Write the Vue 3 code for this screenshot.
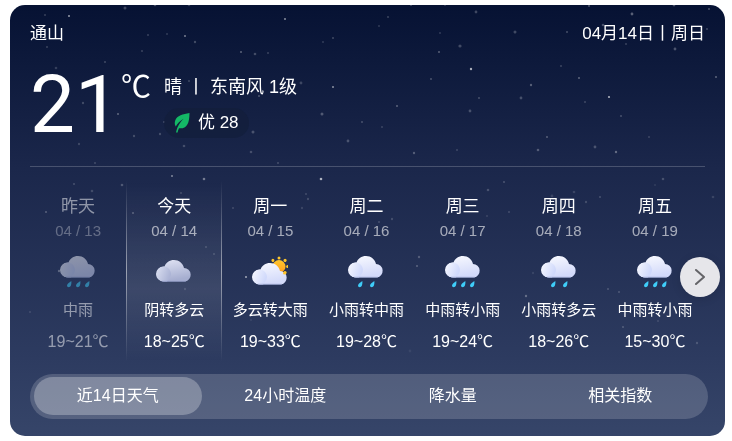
<script setup>
import { ref } from 'vue'

const days = [
  { name: '昨天', date: '04 / 13', icon: 'rain3', text: '中雨', temp: '19~21℃', past: true },
  { name: '今天', date: '04 / 14', icon: 'cloud', text: '阴转多云', temp: '18~25℃', today: true },
  { name: '周一', date: '04 / 15', icon: 'sun', text: '多云转大雨', temp: '19~33℃' },
  { name: '周二', date: '04 / 16', icon: 'rain2', text: '小雨转中雨', temp: '19~28℃' },
  { name: '周三', date: '04 / 17', icon: 'rain3', text: '中雨转小雨', temp: '19~24℃' },
  { name: '周四', date: '04 / 18', icon: 'rain2', text: '小雨转多云', temp: '18~26℃' },
  { name: '周五', date: '04 / 19', icon: 'rain3', text: '中雨转小雨', temp: '15~30℃' },
]

const tabs = ['近14日天气', '24小时温度', '降水量', '相关指数']
const active = ref(0)

const rays = [0, 45, 90, 135, 180, 225, 270, 315]
const drops = { rain3: [9, 18, 27], rain2: [12, 24] }

// Star field: x, y, radius, opacity
const stars = [
  [35, 10, 1, .3], [59, 11, 1, .9], [115, 3, 1.5, .35], [145, 0, 1.3, .4], [179, 0, 1.3, .3],
  [138, 30, 1, .3], [157, 29, 1, .25], [175, 31, 1, .7], [185, 37, 1.2, .35], [132, 46, 1, .3],
  [37, 42, 1, .3], [95, 57, 1.1, .3], [46, 63, 1.3, .25], [275, 14, 1, .8], [313, 37, 1, .25],
  [323, 33, 1, .35], [231, 47, 1, .5], [245, 49, 1.3, .35], [258, 48, 1, .3], [179, 76, 1, .3],
  [291, 78, 1.4, .3], [323, 82, 1, .8], [249, 91, 1, .4], [312, 109, 1.5, .4], [352, 117, 1, .35],
  [338, 136, 1.4, .35], [243, 127, 1.5, .35], [241, 147, 1.3, .3], [268, 158, 1, .3], [154, 117, 1, .3],
  [150, 129, 1.2, .3], [174, 141, 1.3, .3], [124, 131, 1.2, .3], [108, 109, 1, .5], [73, 98, 1.2, .3],
  [69, 139, 1.2, .25], [85, 158, 1.1, .25], [162, 171, 1, .7], [194, 174, 1.3, .6], [311, 174, 1.3, 1],
  [401, 0, 1, .4], [435, 0, 1, .3], [466, 7, 1.4, .35], [378, 12, 1.1, .3], [369, 21, 1, .25],
  [430, 28, 1, .25], [505, 27, 1.5, .35], [450, 41, 1.6, .35], [429, 47, 1.1, .45], [461, 64, 1.2, 1],
  [421, 74, 1.1, .35], [521, 80, 1.2, .45], [511, 93, 1.4, .35], [469, 93, 1, .35], [460, 106, 1.4, .35],
  [387, 101, 1.1, .45], [372, 122, 1, .25], [404, 148, 1.2, .4], [447, 145, 1, .25], [528, 145, 1.3, .4],
  [537, 132, 1.1, .4], [551, 61, 1, .3], [569, 73, 1, .5], [599, 92, 1.1, 1], [575, 97, 1, .3],
  [611, 111, 1, .35], [585, 142, 1.4, .35], [606, 147, 1.2, .5], [639, 132, 1, .25], [557, 27, 1.1, .35],
  [579, 1, 1.1, .4], [622, 9, 1.4, .5], [593, 20, 1.3, .4], [664, 0, 1.4, .45], [699, 4, 1.1, .4],
  [697, 24, 1, .35], [665, 44, 1.4, .4], [616, 39, 1, .3], [706, 72, 1, .5], [653, 174, 1.3, .3],
  [64, 179, 1, .3], [112, 180, 1.3, .35], [82, 186, 1.3, .25], [36, 207, 1, .4], [20, 307, 1, .2],
  [49, 266, 1.2, .4], [123, 208, 1, .4], [171, 188, 1, .25], [196, 242, 1, .25], [204, 249, 1, .25],
  [175, 284, 1.2, .2], [296, 189, 1, .25], [298, 194, 1.2, .25], [292, 203, 1.2, .2], [223, 203, 1, .25],
  [382, 214, 1.2, .25], [369, 217, 1, .25], [409, 252, 1.2, .35], [407, 261, 1, .4], [236, 272, 1, .9],
  [241, 315, 1.2, .1], [400, 346, 1.4, .1], [494, 177, 1.1, .3], [478, 185, 1.3, .3], [542, 191, 1.4, .2],
  [564, 187, 1.3, .2], [590, 192, 1, .3], [576, 197, 1.2, .25], [499, 207, 1, .25], [477, 211, 1, .2],
  [523, 268, 1.2, .15], [516, 291, 1.2, .45], [598, 284, 1, .3], [422, 312, 1, .2], [469, 335, 1, .25],
  [645, 180, 1, .15], [703, 192, 1.3, .2], [609, 287, 1, .3], [613, 322, 1.1, .3], [648, 316, 1, .2],
  [687, 338, 1.2, .25],
]
</script>

<template>
  <main class="card">
    <svg class="sky" viewBox="0 0 715 431" preserveAspectRatio="xMidYMin slice" aria-hidden="true">
      <defs>
        <linearGradient id="cloudFill" x1="0" y1="0" x2="0.3" y2="1">
          <stop offset="0" stop-color="#fafbff" />
          <stop offset="1" stop-color="#d3dafa" />
        </linearGradient>
        <linearGradient id="cloudPuff" x1="0" y1="0" x2="1" y2="0.4">
          <stop offset="0" stop-color="#f8f9ff" />
          <stop offset="1" stop-color="#d0d9fb" />
        </linearGradient>
        <linearGradient id="greyFill" x1="0" y1="0" x2="0.3" y2="1">
          <stop offset="0" stop-color="#e2e5f5" />
          <stop offset="1" stop-color="#a6aed0" />
        </linearGradient>
        <linearGradient id="greyPuff" x1="0" y1="0" x2="1" y2="0.4">
          <stop offset="0" stop-color="#dde1f2" />
          <stop offset="1" stop-color="#adb5d6" />
        </linearGradient>
        <linearGradient id="sunFill" x1="0" y1="0" x2="0" y2="1">
          <stop offset="0" stop-color="#ffc72e" />
          <stop offset="1" stop-color="#ff9d1c" />
        </linearGradient>
      </defs>
      <g opacity="0.65" fill="#fff">
        <circle v-for="(s, i) in stars" :key="i" :cx="s[0]" :cy="s[1]" :r="s[2]" :opacity="s[3]" />
      </g>
    </svg>

    <header class="top">
      <span>通山</span>
      <span>04月14日丨周日</span>
    </header>

    <section class="now">
      <span class="degrees">21</span>
      <span class="unit">℃</span>
      <div class="details">
        <p class="wind">晴 丨 东南风 1级</p>
        <p class="air">
          <svg width="16" height="20" viewBox="0 0 16 20" aria-hidden="true">
            <path d="M15.500 0C9 1 3 2.500 1.200 7.500C.4 10 .8 12 1.800 13.600C3.500 10.500 6 8 9.500 5.800C6.500 9 3.500 12.500 2 19.500L3.600 19.500C3.900 17.800 4.300 16.500 5 15.300C12.500 16 15.500 11 15.500 0Z" fill="#14b866" />
          </svg>
          <span>优 28</span>
        </p>
      </div>
    </section>

    <section class="forecast">
      <ul class="days">
        <li v-for="d in days" :key="d.date" class="day" :class="{ past: d.past, today: d.today }">
          <span class="name">{{ d.name }}</span>
          <span class="date">{{ d.date }}</span>
          <svg class="icon" width="36" height="40" viewBox="0 0 36 40" aria-hidden="true">
            <g v-if="d.icon === 'sun'" transform="translate(27 15.500)">
              <circle r="6.500" fill="url(#sunFill)" />
              <circle v-for="r in rays" :key="r" cx="0" cy="-8.600" r="1.500" fill="#ffc62b" :transform="`rotate(${r})`" />
            </g>
            <g :transform="d.icon === 'sun' ? 'translate(0 12)' : d.icon === 'cloud' ? 'translate(0 9)' : 'translate(0 5)'">
              <path
                d="M8 21.500A7.500 7.500 0 0 1 8.500 6.500C10 2.500 13.500 0 18 0C23 0 27 3.500 28 8A6.800 6.800 0 0 1 29 21.500Z"
                :fill="d.icon === 'cloud' ? 'url(#greyFill)' : 'url(#cloudFill)'"
              />
              <path
                d="M7.500 6.500A7.500 7.500 0 0 1 13 19L11 21.500H7.500A7.500 7.500 0 0 1 7.500 6.500Z"
                :fill="d.icon === 'cloud' ? 'url(#greyPuff)' : 'url(#cloudPuff)'"
              />
              <path d="M6 21.200H30" stroke="#9aa6d4" stroke-width="1" opacity="0.6" />
            </g>
            <circle v-if="d.icon === 'sun'" cx="32.500" cy="22" r="1.500" fill="#ffc62b" />
            <path
              v-for="x in drops[d.icon] || []"
              :key="x"
              :transform="`translate(${x} 30)`"
              d="M2.300 0C0 1.500 -2 3 -2 4.600C-2 6.600 1 6.800 1.800 4.800C2.400 3.200 2.500 1.500 2.300 0Z"
              fill="#3fcdf8"
            />
          </svg>
          <span class="text">{{ d.text }}</span>
          <span class="temp">{{ d.temp }}</span>
        </li>
      </ul>
      <button class="next" type="button" aria-label="后几天">
        <svg width="12" height="18" viewBox="0 0 12 18" aria-hidden="true">
          <path d="M2 2L10 9L2 16" fill="none" stroke="#646468" stroke-width="2" stroke-linecap="round" stroke-linejoin="round" />
        </svg>
      </button>
    </section>

    <nav class="tabs">
      <button v-for="(t, i) in tabs" :key="t" type="button" :class="{ active: i === active }" @click="active = i">{{ t }}</button>
    </nav>
  </main>
</template>

<style>
body {
  background: #fff;
}
</style>

<style scoped>
.card {
  position: relative;
  margin: 5px 7px 5px 10px;
  padding: 17px 20px;
  border-radius: 15px;
  background: linear-gradient(#061233, #1b274b 38%, #2d3b60 82%, #364569);
  color: #fff;
  font: 16px/24px "Liberation Sans", "Noto Sans CJK SC", sans-serif;
}

.sky {
  position: absolute;
  inset: 0;
  width: 100%;
  height: 100%;
  border-radius: 15px;
}

.top,
.now,
.forecast,
.tabs {
  position: relative;
}

.top {
  display: flex;
  justify-content: space-between;
  font-size: 17px;
  line-height: 24px;
}

.now {
  display: flex;
  height: 120px;
  border-bottom: 1px solid rgba(255, 255, 255, 0.2);
}

.degrees {
  padding-top: 19px;
  font-family: Roboto, "Liberation Sans", sans-serif;
  font-size: 80px;
  line-height: 80px;
}

.unit {
  padding: 26px 0 0 1px;
  font-size: 30px;
  line-height: 30px;
}

.details {
  padding: 27px 0 0 13px;
}

.wind,
.air {
  margin: 0;
}

.wind {
  font-size: 18px;
  line-height: 28px;
}

.air {
  display: inline-flex;
  align-items: center;
  gap: 8px;
  height: 30px;
  margin-top: 7px;
  padding: 0 10px;
  border-radius: 15px;
  background: rgba(18, 30, 58, 0.7);
  font-size: 17px;
}

.forecast {
  padding: 14px 2px 13px 0;
}

.days {
  display: grid;
  grid-template-columns: repeat(7, 1fr);
  margin: 0;
  padding: 0;
  list-style: none;
}

.day {
  display: flex;
  flex-direction: column;
  align-items: center;
  padding: 14px 0 9px;
  line-height: 20px;
  white-space: nowrap;
}

.past > * {
  opacity: 0.5;
}

.today {
  border: solid transparent;
  border-width: 0 1px;
  border-image: linear-gradient(rgba(255, 255, 255, 0), rgba(255, 255, 255, 0.5) 50%, rgba(255, 255, 255, 0)) 1;
  background: linear-gradient(rgba(255, 255, 255, 0), rgba(255, 255, 255, 0.1) 60%, rgba(255, 255, 255, 0));
}

.name {
  font-size: 17px;
  line-height: 24px;
}

.date {
  margin-top: 2px;
  font-size: 15px;
  color: rgba(255, 255, 255, 0.6);
}

.icon {
  margin-top: 10px;
}

.text {
  margin-top: 9px;
  font-size: 15px;
}

.temp {
  margin-top: 12px;
}

.next {
  position: absolute;
  top: 90px;
  right: -15px;
  display: grid;
  place-items: center;
  width: 40px;
  height: 40px;
  padding: 0;
  border: 0;
  border-radius: 50%;
  background: #e6e6ea;
  box-shadow: 0 2px 10px rgba(0, 0, 0, 0.12);
  cursor: pointer;
}

.tabs {
  display: grid;
  grid-template-columns: repeat(4, 1fr);
  margin-right: -3px;
  padding: 3px 4px 4px;
  border-radius: 23px;
  background: rgba(255, 255, 255, 0.17);
}

.tabs button {
  height: 38px;
  padding: 0;
  border: 0;
  border-radius: 19px;
  background: none;
  color: #fff;
  font: inherit;
  cursor: pointer;
}

.tabs .active {
  background: rgba(255, 255, 255, 0.27);
}
</style>
